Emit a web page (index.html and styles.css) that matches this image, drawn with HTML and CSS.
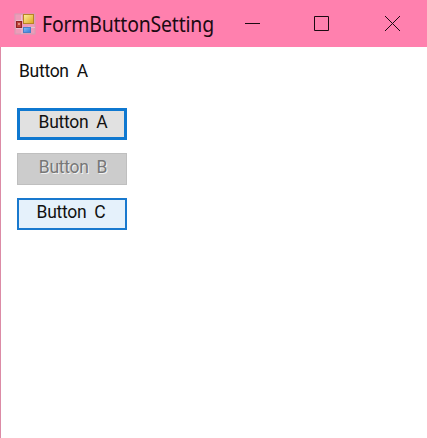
FILE: index.html
```html
<!DOCTYPE html>
<html lang="en">
<head>
<meta charset="utf-8">
<title>FormButtonSetting</title>
<link rel="stylesheet" href="styles.css">
</head>
<body>
<div class="window">
  <header class="titlebar">
    <svg class="app-icon" width="22" height="22" viewBox="0 0 22 22">
      <defs>
        <linearGradient id="gold" x2="1" y2="1"><stop stop-color="#fff0a0"/><stop offset="1" stop-color="#dda51c"/></linearGradient>
        <linearGradient id="blue" x2="1" y2="1"><stop stop-color="#86c0fa"/><stop offset="1" stop-color="#3478d2"/></linearGradient>
      </defs>
      <rect x="1" y="1" width="20" height="20" fill="#ee9bb9" stroke="#cf9fb2"/>
      <path d="M2 7.5h8M7.5 2v5M2 15.5h8M8 15v6M15 13v2M16 14.5h5" stroke="#e5c2d0" fill="none"/>
      <rect x="9.5" y="1.5" width="10" height="9" fill="url(#gold)" stroke="#b88424"/>
      <rect x="2.5" y="8.5" width="5" height="6" fill="#bd4338" stroke="#8f2323"/>
      <path d="M4 10h2v2H4z" fill="#e09080"/>
      <rect x="9.5" y="14.5" width="7" height="5" fill="url(#blue)" stroke="#4a7fc7"/>
    </svg>
    <h1 class="title">FormButtonSetting</h1>
    <div class="controls">
      <svg width="15" height="16" viewBox="0 0 15 16"><path d="M0 7.5h15"/></svg>
      <svg width="15" height="16" viewBox="0 0 15 16"><path d="M.5 .5h14v14H.5z"/></svg>
      <svg class="close" width="15" height="16" viewBox="0 0 15 16"><path d="M0 0l15 15M15 0L0 15"/></svg>
    </div>
  </header>
  <main class="client">
    <div class="label">Button A</div>
    <button class="btn btn-default">Button A</button>
    <button class="btn btn-disabled" disabled>Button B</button>
    <button class="btn btn-hover">Button C</button>
  </main>
</div>
</body>
</html>
```
FILE: styles.css
```css
* { box-sizing: border-box; }
body { margin: 0; }
.window {
  height: 438px;
  display: flex;
  flex-direction: column;
  background: #fff;
}
.titlebar {
  height: 47px;
  flex: none;
  display: flex;
  align-items: center;
  padding: 0 27px 0 14px;
  background: #ff80ae;
}
.app-icon { flex: none; }
.title {
  width: 184px;
  margin: 0 0 0 6px;
  font: 400 21px/28px "Noto Sans", sans-serif;
  letter-spacing: -0.2px;
  color: #1c0a12;
  white-space: nowrap;
  transform: scaleX(0.925);
  transform-origin: left center;
}
.controls {
  margin-left: auto;
  display: flex;
  gap: 54px;
}
.controls svg {
  flex: none;
  fill: none;
  stroke: #1c0a12;
  stroke-width: 1;
}
.controls .close { margin-left: 2px; }
.client {
  flex: 1;
  display: flex;
  flex-direction: column;
  align-items: flex-start;
  padding: 14px 0 0 16px;
  border-left: 1px solid #dc8ba6;
  font: 400 17.5px/20px Roboto, sans-serif;
  letter-spacing: -0.3px;
  color: #111;
}
.label {
  height: 20px;
  margin: 0 0 27px 2px;
  word-spacing: 4px;
}
.btn {
  width: 110px;
  height: 32px;
  margin-bottom: 13px;
  padding: 0 0 4px 2px;
  border: 1px solid #bfbfbf;
  background: #ccc;
  font: inherit;
  letter-spacing: inherit;
  word-spacing: 4px;
  color: #111;
}
.btn-default { border: 3px solid #0f78d0; background: #e1e1e1; }
.btn-disabled { color: #777; text-shadow: 1px 1px 0 #f2f2f2; }
.btn-hover { border: 2px solid #1979ce; background: #e5f1fb; padding-left: 0; padding-right: 2px; }
```
